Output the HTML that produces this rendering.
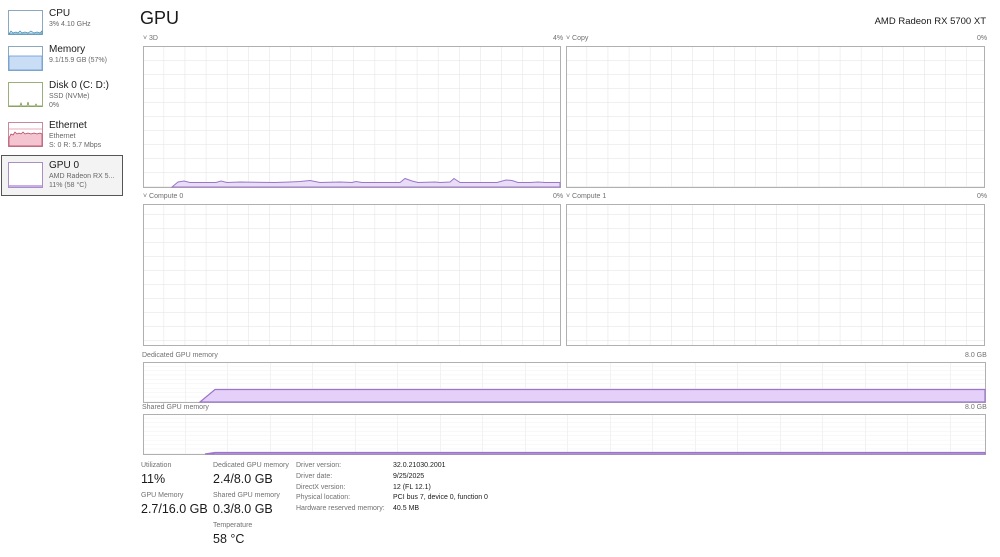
<!DOCTYPE html>
<html><head><meta charset="utf-8"><style>
*{margin:0;padding:0;box-sizing:border-box}
body{width:1000px;height:557px;background:#fff;position:relative;overflow:hidden;font-family:"Segoe UI","Liberation Sans",sans-serif;color:#1a1a1a}
.a{position:absolute;white-space:nowrap}
.t{font-size:10px;color:#1a1a1a}
.s{font-size:7px;color:#666}
.l{font-size:7px;color:#707070}
.v{font-size:12.5px;color:#1a1a1a}
</style></head><body>
<svg class="a" style="left:0;top:0" width="1000" height="557">
<defs>
<pattern id="g" x="143" y="47" width="21.1" height="14" patternUnits="userSpaceOnUse"><path d="M21.1 0V14M0 14H21.1" stroke="#e2e2e2" stroke-width="1" fill="none"/></pattern>
<pattern id="g2" x="566" y="47" width="21.1" height="14" patternUnits="userSpaceOnUse"><path d="M21.1 0V14M0 14H21.1" stroke="#e2e2e2" stroke-width="1" fill="none"/></pattern>
<pattern id="m" x="143" y="362" width="42.5" height="4.4" patternUnits="userSpaceOnUse"><path d="M42.5 0V5" stroke="#e4e4e4" stroke-width="1" fill="none"/><path d="M0 4.4H42.5" stroke="#f2f2f2" stroke-width="1" fill="none"/></pattern>
<pattern id="m2" x="143" y="414" width="42.5" height="4.4" patternUnits="userSpaceOnUse"><path d="M42.5 0V5" stroke="#e4e4e4" stroke-width="1" fill="none"/><path d="M0 4.4H42.5" stroke="#f2f2f2" stroke-width="1" fill="none"/></pattern>
</defs>
<rect x="1.5" y="155.5" width="121" height="40" fill="#f3f3f3" stroke="#555"/>
<rect x="8.5" y="10.5" width="34" height="24" fill="#fff" stroke="#8aa9c0"/>
<path d="M9 34 L11 31 L13 33 L16 32 L18 33 L20 31 L22 33 L25 32 L28 33 L31 31 L34 33 L37 32 L40 33 L42 31 V34Z" fill="#cfe3ee" stroke="#3b8bb5" stroke-width=".7"/>
<rect x="8.5" y="46.5" width="34" height="24" fill="#fff" stroke="#8aa9c0"/>
<rect x="9" y="56" width="33" height="14" fill="#c9ddf5" stroke="#6a9bd8" stroke-width=".8"/>
<rect x="8.5" y="82.5" width="34" height="24" fill="#fff" stroke="#9ab07a"/>
<path d="M9 106 H20 L21 103 L22 106 H27 L28 102 L29 106 H35 L36 104 L37 106 H42" stroke="#6d8b3a" stroke-width=".7" fill="none"/>
<rect x="8.5" y="122.5" width="34" height="24" fill="#fff" stroke="#c88a9a"/>
<rect x="9" y="128" width="33" height="2" fill="#f3d5dd"/>
<path d="M9 146 V138 L11 134 L13 135 L15 132 L17 134 L19 133 L21 134 L23 132 L25 134 L28 133 L31 134 L34 133 L37 134 L40 133 L42 134 V146Z" fill="#f4c4d0" stroke="#b0405c" stroke-width=".7"/>
<rect x="8.5" y="162.5" width="34" height="25" fill="#fff" stroke="#a98fc4"/>
<rect x="9" y="185" width="33" height="2" fill="#c7aee6"/>
<rect x="143.5" y="46.5" width="417" height="141" fill="url(#g)" stroke="#b0b0b0"/>
<rect x="566.5" y="46.5" width="418" height="141" fill="url(#g2)" stroke="#b0b0b0"/>
<rect x="143.5" y="204.5" width="417" height="141" fill="url(#g)" stroke="#b0b0b0"/>
<rect x="566.5" y="204.5" width="418" height="141" fill="url(#g2)" stroke="#b0b0b0"/>
<path d="M172 187 L178 182 L184 181 L190 182.5 L216 182.5 L221 181 L227 182.5 L240 182 L275 182.5 L290 182 L300 181.5 L310 180.5 L320 182.5 L340 182 L352 182.5 L356 181.5 L362 182.5 L400 182.5 L405 178.5 L412 181 L418 182.5 L435 182 L440 182.5 L450 182 L454 178.5 L460 182.5 L497 182.5 L506 180 L512 180.5 L518 182.5 L530 182.5 L538 182 L545 182.5 L560 182.5 V187Z" fill="#e8dcf7" stroke="#9b76c9" stroke-width="1"/>
<rect x="143.5" y="362.5" width="842" height="40" fill="url(#m)" stroke="#b0b0b0"/>
<path d="M200 402 L215 389.5 H985 V402Z" fill="#e5d0fa" stroke="#9b76c9" stroke-width="1.2"/>
<rect x="143.5" y="414.5" width="842" height="40" fill="url(#m2)" stroke="#b0b0b0"/>
<path d="M205 454 L215 452.5 H985 V454Z" fill="#e5d0fa" stroke="#9b76c9" stroke-width="1.2"/>
</svg>
<div class="a t" style="left:49px;top:8px">CPU</div>
<div class="a s" style="left:49px;top:21px">3% 4.10 GHz</div>
<div class="a t" style="left:49px;top:44px">Memory</div>
<div class="a s" style="left:49px;top:57px">9.1/15.9 GB (57%)</div>
<div class="a t" style="left:49px;top:80px">Disk 0 (C: D:)</div>
<div class="a s" style="left:49px;top:93px">SSD (NVMe)</div>
<div class="a s" style="left:49px;top:102px">0%</div>
<div class="a t" style="left:49px;top:120px">Ethernet</div>
<div class="a s" style="left:49px;top:133px">Ethernet</div>
<div class="a s" style="left:49px;top:142px">S: 0 R: 5.7 Mbps</div>
<div class="a t" style="left:49px;top:160px">GPU 0</div>
<div class="a s" style="left:49px;top:173px">AMD Radeon RX 5...</div>
<div class="a s" style="left:49px;top:182px">11% (58 °C)</div>
<div class="a" style="left:140px;top:8px;font-size:18px">GPU</div>
<div class="a" style="right:14px;top:16px;font-size:9.5px">AMD Radeon RX 5700 XT</div>
<div class="a l" style="left:143px;top:35px">˅ 3D</div>
<div class="a l" style="left:553px;top:35px">4%</div>
<div class="a l" style="left:566px;top:35px">˅ Copy</div>
<div class="a l" style="left:977px;top:35px">0%</div>
<div class="a l" style="left:143px;top:193px">˅ Compute 0</div>
<div class="a l" style="left:553px;top:193px">0%</div>
<div class="a l" style="left:566px;top:193px">˅ Compute 1</div>
<div class="a l" style="left:977px;top:193px">0%</div>
<div class="a l" style="left:142px;top:352px">Dedicated GPU memory</div>
<div class="a l" style="left:965px;top:352px">8.0 GB</div>
<div class="a l" style="left:142px;top:404px">Shared GPU memory</div>
<div class="a l" style="left:965px;top:404px">8.0 GB</div>
<div class="a l" style="left:141px;top:462px">Utilization</div>
<div class="a v" style="left:141px;top:472px">11%</div>
<div class="a l" style="left:141px;top:492px">GPU Memory</div>
<div class="a v" style="left:141px;top:502px">2.7/16.0 GB</div>
<div class="a l" style="left:213px;top:462px">Dedicated GPU memory</div>
<div class="a v" style="left:213px;top:472px">2.4/8.0 GB</div>
<div class="a l" style="left:213px;top:492px">Shared GPU memory</div>
<div class="a v" style="left:213px;top:502px">0.3/8.0 GB</div>
<div class="a l" style="left:213px;top:522px">Temperature</div>
<div class="a v" style="left:213px;top:532px">58 °C</div>
<div class="a l" style="left:296px;top:461px;line-height:10.8px">Driver version:<br>Driver date:<br>DirectX version:<br>Physical location:<br>Hardware reserved memory:</div>
<div class="a" style="left:393px;top:461px;font-size:7px;line-height:10.8px;color:#1a1a1a">32.0.21030.2001<br>9/25/2025<br>12 (FL 12.1)<br>PCI bus 7, device 0, function 0<br>40.5 MB</div>
</body></html>
